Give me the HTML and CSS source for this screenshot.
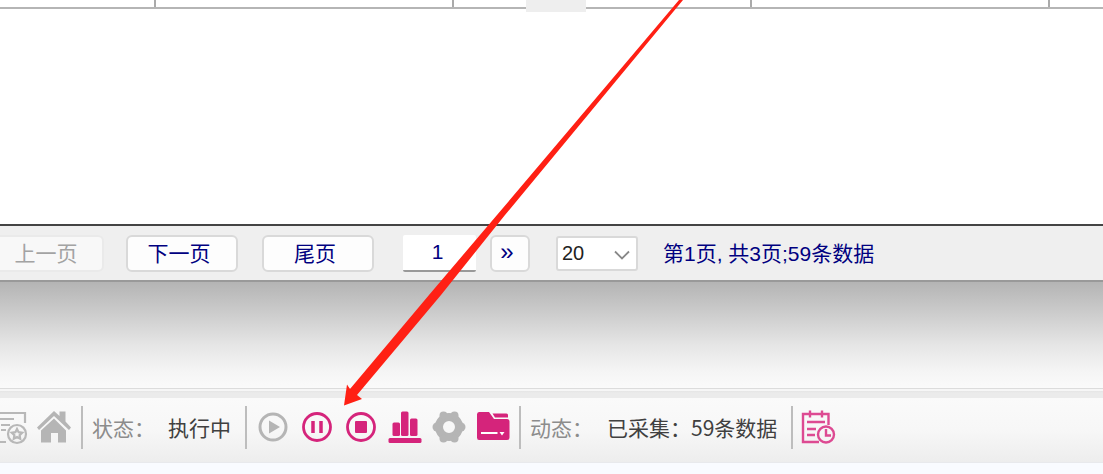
FILE: index.html
```
<!DOCTYPE html>
<html lang="zh-CN">
<head>
<meta charset="utf-8">
<title>数据采集</title>
<link rel="stylesheet" href="styles.css">
</head>
<body>
<main class="app">
  <section class="grid">
    <div class="row"><span class="cell first"></span><span class="cell"></span><span class="cell"><i class="mask"></i></span><span class="cell"></span><span class="cell last"></span></div>
  </section>
  <nav class="pager" aria-label="分页">
    <button class="btn prev" disabled>上一页</button>
    <button class="btn next">下一页</button>
    <button class="btn end">尾页</button>
    <input class="page" type="text" value="1" aria-label="页码">
    <button class="btn go">»</button>
    <span class="select"><select aria-label="每页条数"><option>20</option></select>
      <svg class="chevron" width="16" height="10" viewBox="0 0 16 10"><path d="M1 1.500l7 7 7-7" fill="none" stroke="#888" stroke-width="1.800"/></svg></span>
    <span class="summary">第1页, 共3页;59条数据</span>
  </nav>
  <div class="shade"></div>
  <div class="edge"></div>
  <footer class="status">
    <button class="icon list" aria-label="收藏"><svg width="32" height="36" viewBox="0 0 32 36" fill="none" stroke="#b8b8b8" stroke-width="2.200"><path d="M0 4h28v10M0 10h17M4 16h9M4 21h5M0 33h9"/><circle cx="20" cy="25" r="9"/><path d="M20 20l1.600 3.200 3.600.5-2.600 2.500.6 3.600-3.200-1.700-3.200 1.700.6-3.600-2.600-2.500 3.600-.5z"/></svg></button>
    <button class="icon home" aria-label="主页"><svg width="36" height="36" viewBox="0 0 36 36" fill="#b5b5b5"><path d="M1 18.500L18 2l5.500 5V2.500h6v10l5.500 6-2 2.500L18 7 3 21z"/><path d="M5 21.500L18 9.500l12 12V33.500h-8V24h-7v9.500H5z"/></svg></button>
    <span class="rule"></span>
    <span class="label">状态：</span><span class="value state">执行中</span>
    <span class="rule"></span>
    <div class="tools">
      <button class="icon" aria-label="开始"><svg width="36" height="36" viewBox="0 0 36 36"><circle cx="18" cy="18" r="13" fill="none" stroke="#b5b5b5" stroke-width="3"/><path d="M14 11.500l11 6.500-11 6.500z" fill="#b5b5b5"/></svg></button>
      <button class="icon" aria-label="暂停"><svg width="36" height="36" viewBox="0 0 36 36" fill="none" stroke="#d5247b"><circle cx="18" cy="18" r="13.500" stroke-width="2.800"/><path d="M14 12v12M22 12v12" stroke-width="3.500"/></svg></button>
      <button class="icon" aria-label="停止"><svg width="36" height="36" viewBox="0 0 36 36"><circle cx="18" cy="18" r="13.500" fill="none" stroke="#d5247b" stroke-width="2.800"/><rect x="12" y="12" width="12" height="12" rx="1" fill="#d5247b"/></svg></button>
      <button class="icon" aria-label="统计"><svg width="36" height="36" viewBox="0 0 36 36" fill="#d5247b"><rect x="5.500" y="13.500" width="7.500" height="13.500" rx="1.500"/><rect x="14" y="2.500" width="7.500" height="24.500" rx="1.500"/><rect x="23" y="9.500" width="7.500" height="17.500" rx="1.500"/><rect x="1.500" y="29" width="33" height="5" rx="1.500"/></svg></button>
      <button class="icon" aria-label="设置"><svg width="36" height="36" viewBox="0 0 36 36"><circle cx="18" cy="18" r="10" fill="none" stroke="#b5b5b5" stroke-width="8"/><g fill="#b5b5b5"><circle cx="12.500" cy="6.500" r="4"/><circle cx="23.500" cy="6.500" r="4"/><circle cx="30" cy="18" r="4.500"/><circle cx="23.500" cy="29.500" r="4"/><circle cx="12.500" cy="29.500" r="4"/><circle cx="6" cy="18" r="4.500"/></g></svg></button>
      <button class="icon" aria-label="文件夹"><svg width="36" height="36" viewBox="0 0 36 36"><path d="M4 3h10l5 7H32q2.500 0 2.500 2.500v16q0 2.500-2.500 2.500H4Q2 31 2 28.500v-23Q2 3 4 3zM17.500 4.500h14q1.500 0 1.500 1.500v2.500H20z" fill="#d5247b"/><path d="M6 24h16.500" stroke="#fff" stroke-width="2"/><path d="M24.500 23h5l-2.500 3.500z" fill="#fff"/></svg></button>
    </div>
    <span class="rule"></span>
    <span class="label">动态：</span><span class="value news">已采集：59条数据</span>
    <span class="rule"></span>
    <button class="icon schedule" aria-label="计划"><svg width="36" height="36" viewBox="0 0 36 36" fill="none" stroke="#dd4a92" stroke-width="2.400"><path d="M28.500 16V5H3V33h16M10 1.500v7M22 1.500v7M7 13h18M7 20h9M7 26h8"/><circle cx="26" cy="25.500" r="8"/><path d="M26 20v6.500h5"/></svg></button>
  </footer>
  <svg class="arrow" width="370" height="410" viewBox="0 0 370 410" aria-hidden="true"><path d="M359 0h4L185 215 121 295 37 395l5 4-18 6.500 3-21 3 4.500 79-94L177 215z" fill="#ff2014"/></svg>
</main>
</body>
</html>
```
FILE: styles.css
```
* { box-sizing: border-box; }
body { margin: 0; min-height: 100vh; background: #f9fbff; font-family: "Liberation Sans", "Noto Sans CJK SC", sans-serif; font-size: 21px; }
.app { position: relative; overflow: hidden; }
.grid { height: 224px; background: #fff; }
.row { display: flex; height: 9px; border-bottom: 2px solid #b5b5b5; }
.cell { flex: 0 0 298px; border-right: 2px solid #aaa; position: relative; }
.first { flex-basis: 156px; }
.last { flex: 1; border: 0; }
.mask { position: absolute; left: 72px; top: 0; width: 60px; height: 12px; background: #eee; }
.pager { display: flex; align-items: center; height: 58px; border-top: 2px solid #444; border-bottom: 2px solid #999; background: #efefef; color: #000080; }
.btn { height: 37px; padding: 2px 0 0; border: 2px solid #d9d9d9; border-radius: 6px; background: #fdfdfd; color: #000080; font: inherit; line-height: 30px; white-space: nowrap; }
.prev { width: 116px; margin-left: -12px; margin-right: 22px; border-color: #eaeaea; background: #f8f8f8; color: #a3a3a3; }
.next, .end { width: 112px; margin-right: 24px; padding-right: 6px; }
.end { margin-right: 29px; }
.page { width: 73px; height: 37px; padding: 0 4px 0 0; border: 0; border-bottom: 2px solid #999; border-radius: 2px; background: #fff; color: #000080; font: inherit; text-align: center; }
.go { width: 40px; margin: 0 26px 0 14px; padding: 0 6px 2px 0; font-size: 24px; }
.select { position: relative; width: 82px; height: 35px; }
.select select { width: 100%; height: 100%; padding: 0 4px; appearance: none; border: 2px solid #d9d9d9; border-radius: 3px; background: #fff; color: #222; font: inherit; font-size: 20px; }
.chevron { position: absolute; right: 8px; top: 14px; pointer-events: none; }
.summary { margin-left: 25px; padding-top: 2px; line-height: 30px; white-space: nowrap; }
.shade { height: 106px; background: linear-gradient(#b4b4b4, #cbcbcb 28%, #e6e6e6 60%, #f5f5f5 85%, #fafafa); }
.edge { height: 10px; border-top: 1px solid #dcdcdc; background: linear-gradient(#f6f6f6 2px, #e5e5e5 2px, #ebebeb 4px, #ebebeb); }
.status { display: flex; align-items: center; height: 65px; padding-bottom: 6px; border-bottom: 1px solid #e8e9ec; background: linear-gradient(#fafafa, #f7f7f7 50%, #ededed); font-family: "Noto Sans CJK SC", sans-serif; white-space: nowrap; }
.icon { display: flex; padding: 0; border: 0; background: none; }
.list { margin-left: -3px; margin-right: 7px; }
.home { margin-right: 9px; }
.rule { width: 2px; height: 43px; background: #bdbdbd; }
.label { width: 76px; margin-left: 9px; color: #8c8c8c; line-height: 30px; }
.value { color: #404040; line-height: 30px; }
.state { margin-right: 14px; }
.tools { display: flex; gap: 8px; margin: 0 8px 0 8px; }
.news { margin: 0 14px 0 1px; }
.schedule { margin-left: 7px; }
.arrow { position: absolute; left: 320px; top: 0; pointer-events: none; }
```
